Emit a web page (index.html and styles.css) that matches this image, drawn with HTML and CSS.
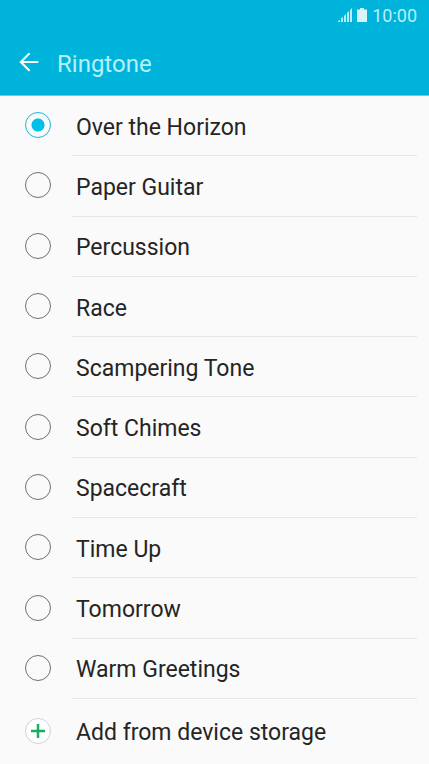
FILE: index.html
```html
<!DOCTYPE html>
<html lang="en">
<head>
<meta charset="utf-8">
<meta name="viewport" content="width=device-width, initial-scale=1">
<title>Ringtone</title>
<link rel="stylesheet" href="styles.css">
</head>
<body>
<header class="header">
  <div class="status">
    <svg class="signal" width="14" height="15" viewBox="0 0 14 15" aria-hidden="true"><path d="M0 14v-1l2-1v2zM3 14v-3.500l2-1.500v5zM6 14V8l2-2v8zM9 14V5l2-2v11zM12 14V2l2-2v14z"/></svg>
    <svg class="battery" width="10" height="15" viewBox="0 0 10 15" aria-hidden="true"><path d="M3 0h4v1.500h3V14H0V1.500h3z"/></svg>
    <span>10:00</span>
  </div>
  <div class="bar">
    <button class="back" type="button" aria-label="Back"><svg width="20" height="20" viewBox="0 0 20 20" aria-hidden="true"><path d="M18.500 9H2M10 .8L1.800 9l8.200 8.200"/></svg></button>
    <h1 class="title">Ringtone</h1>
  </div>
</header>
<main class="list">
  <label class="row"><input class="radio" type="radio" name="tone" checked><span class="name">Over the Horizon</span></label>
  <label class="row"><input class="radio" type="radio" name="tone"><span class="name">Paper Guitar</span></label>
  <label class="row"><input class="radio" type="radio" name="tone"><span class="name">Percussion</span></label>
  <label class="row"><input class="radio" type="radio" name="tone"><span class="name">Race</span></label>
  <label class="row"><input class="radio" type="radio" name="tone"><span class="name">Scampering Tone</span></label>
  <label class="row"><input class="radio" type="radio" name="tone"><span class="name">Soft Chimes</span></label>
  <label class="row"><input class="radio" type="radio" name="tone"><span class="name">Spacecraft</span></label>
  <label class="row"><input class="radio" type="radio" name="tone"><span class="name">Time Up</span></label>
  <label class="row"><input class="radio" type="radio" name="tone"><span class="name">Tomorrow</span></label>
  <label class="row"><input class="radio" type="radio" name="tone"><span class="name">Warm Greetings</span></label>
  <button class="row add" type="button"><svg class="plus" width="26" height="26" viewBox="0 0 26 26" aria-hidden="true"><circle cx="13" cy="13" r="12.500"/><path d="M13 6v14M6 13h14" stroke-width="2.500"/></svg><span class="name">Add from device storage</span></button>
</main>
</body>
</html>
```
FILE: styles.css
```css
* { box-sizing: border-box; }
body {
  display: flex;
  flex-direction: column;
  min-height: 100vh;
  margin: 0;
  background: #fafafa;
  color: #252525;
  font-family: Roboto, sans-serif;
}
.header {
  background: #00b3da;
  border-bottom: 1px solid #5fd0e8;
  color: #b5f1fb;
}
.status {
  display: flex;
  align-items: center;
  justify-content: flex-end;
  gap: 5px;
  height: 30px;
  padding-right: 12px;
  font-size: 18px;
}
.status svg { fill: currentColor; }
.status .battery { fill: #d5f5fb; }
.bar {
  display: flex;
  align-items: center;
  gap: 18px;
  height: 65px;
  padding: 0 12px 0 19px;
}
.back {
  display: flex;
  padding: 0;
  border: 0;
  background: none;
  color: #fff;
}
.back path {
  fill: none;
  stroke: currentColor;
  stroke-width: 2;
  stroke-linecap: round;
}
.title {
  margin: 0;
  padding-top: 2px;
  font-size: 24px;
  font-weight: 400;
}
.list {
  display: grid;
  flex: 1;
  grid-template-rows: repeat(10, minmax(60px, 1fr)) 65px;
}
.row {
  display: flex;
  align-items: center;
  gap: 21px;
  padding: 0 12px 0 25px;
}
.radio {
  appearance: none;
  flex: none;
  width: 26px;
  height: 26px;
  margin: 0 0 2px;
  border: 1px solid #707070;
  border-radius: 50%;
}
.radio:checked {
  border-color: #14b9de;
  background: radial-gradient(circle, #00bfe8 6px, transparent 7px);
}
.name {
  display: flex;
  flex: 1;
  align-items: center;
  align-self: stretch;
  padding: 3px 0 0 4px;
  border-bottom: 1px solid #e6e6e6;
  font-size: 23px;
}
.add {
  border: 0;
  background: none;
  color: inherit;
  font: inherit;
}
.add .name { border: 0; }
.plus { flex: none; }
.plus circle { fill: #fff; stroke: #d2d2d2; }
.plus path { stroke: #12b060; }
```
